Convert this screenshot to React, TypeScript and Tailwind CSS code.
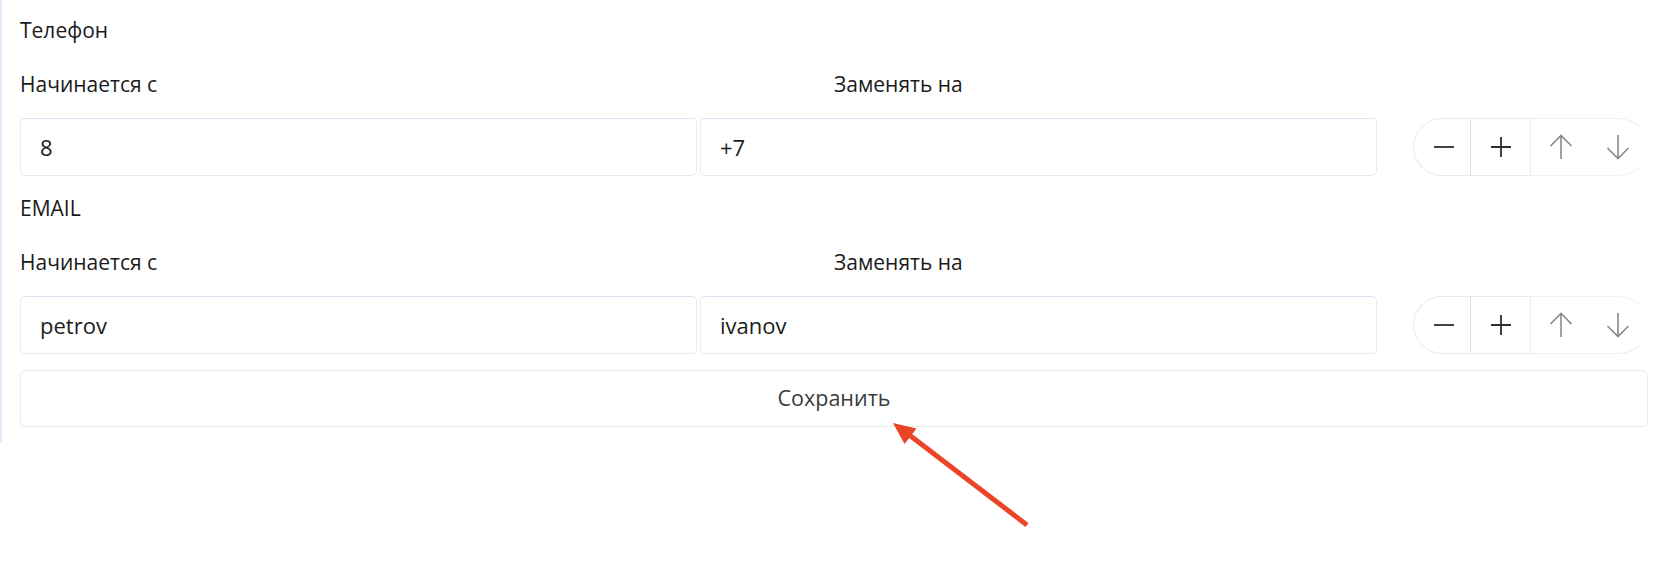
import React from "react";

type Rule = { from: string; to: string };
type Group = { title: string; rules: Rule[] };

const groups: Group[] = [
  { title: "Телефон", rules: [{ from: "8", to: "+7" }] },
  { title: "EMAIL", rules: [{ from: "petrov", to: "ivanov" }] },
];

function MinusIcon() {
  return (
    <svg width="20" height="20" viewBox="0 0 20 20" fill="none">
      <path d="M0 10H20" stroke="#2e2e2e" strokeWidth="1.8" />
    </svg>
  );
}

function PlusIcon() {
  return (
    <svg width="20" height="20" viewBox="0 0 20 20" fill="none">
      <path d="M0 10H20M10 0V20" stroke="#2e2e2e" strokeWidth="1.8" />
    </svg>
  );
}

function ArrowUpIcon() {
  return (
    <svg width="24" height="26" viewBox="0 0 24 26" fill="none">
      <path d="M12 1.5V25M1.5 12L12 1.5L22.5 12" stroke="#8a8a8a" strokeWidth="1.6" />
    </svg>
  );
}

function ArrowDownIcon() {
  return (
    <svg width="24" height="26" viewBox="0 0 24 26" fill="none">
      <path d="M12 1V24.5M1.5 14L12 24.5L22.5 14" stroke="#8a8a8a" strokeWidth="1.6" />
    </svg>
  );
}

function RuleControls() {
  return (
    <div className="flex h-[58px] w-[235px] shrink-0">
      <button className="flex w-[58px] items-center justify-center rounded-l-full border border-[#e9e9ee] border-r-[#dedcf2] bg-white pl-[4px]">
        <MinusIcon />
      </button>
      <button className="flex w-[60px] items-center justify-center border-y border-r border-[#e9e9ee] bg-white">
        <PlusIcon />
      </button>
      <div className="flex flex-1 rounded-r-full border-y border-r border-[#efeefa] border-r-[#fafafd]">
        <button className="flex w-[59px] items-center justify-center">
          <ArrowUpIcon />
        </button>
        <button className="flex flex-1 items-center justify-center pr-[1px]">
          <ArrowDownIcon />
        </button>
      </div>
    </div>
  );
}

function TextField({ value }: { value: string }) {
  return (
    <div className="flex h-[58px] w-[677px] shrink-0 items-center rounded-[5px] border border-[#e9e9ee] border-t-[#e3e1f5] bg-white pl-[19px] text-[22px] text-[#1c1c1c]">
      {value}
    </div>
  );
}

export default function App() {
  return (
    <div
      className="relative min-h-[575px] w-[1680px] bg-white"
      style={{ fontFamily: '"Open Sans", "Noto Sans", sans-serif' }}
    >
      <div className="w-[1680px] border-l-2 border-[#e9e7fa] pb-4 pl-[18px] pr-8 pt-4">
        {groups.map((g, gi) => (
          <section key={g.title} className={gi > 0 ? "mt-[18px]" : ""}>
            <div className="h-7 text-[21px] leading-7 text-[#1a1a1a]">{g.title}</div>
            <div className="mt-[26px] grid h-7 grid-cols-2 text-[21px] leading-7 text-[#1a1a1a]">
              <div>Начинается с</div>
              <div>Заменять на</div>
            </div>
            {g.rules.map((r) => (
              <div key={r.from} className="mt-5 flex items-center">
                <TextField value={r.from} />
                <div className="ml-[3px]">
                  <TextField value={r.to} />
                </div>
                <div className="ml-9">
                  <RuleControls />
                </div>
              </div>
            ))}
          </section>
        ))}
        <button className="mt-4 flex h-[57px] w-full items-center justify-center rounded-[6px] border border-[#e9e9ee] bg-white text-[21.5px] text-[#3b3b3b]">
          Сохранить
        </button>
      </div>

      {/* pointer callout */}
      <svg
        className="pointer-events-none absolute left-0 top-0"
        width="1680"
        height="575"
        viewBox="0 0 1680 575"
      >
        <line x1="1027" y1="525" x2="908" y2="434" stroke="#ec4426" strokeWidth="5" />
        <polygon points="893,423 916.5,428.5 904.5,444" fill="#ec4426" />
      </svg>
    </div>
  );
}
